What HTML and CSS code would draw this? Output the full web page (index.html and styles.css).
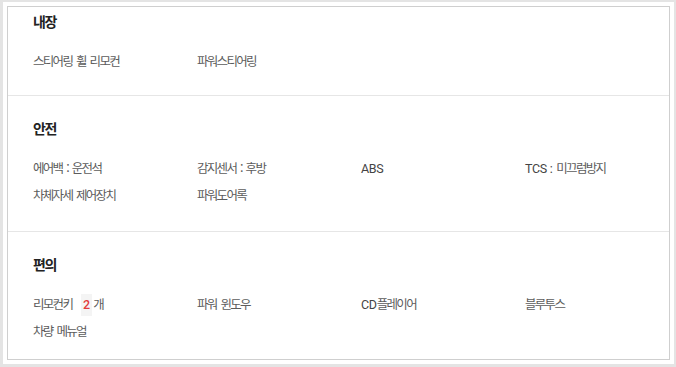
FILE: index.html
```html
<!DOCTYPE html>
<html lang="ko">
<head>
    <meta charset="UTF-8">
    <meta name="viewport" content="width=device-width, initial-scale=1.0">
    <title>차량 옵션</title>
    <link rel="stylesheet" href="styles.css">
</head>
<body>
    <div class="frame">
        <div class="options">
            <div class="group first">
                <h3>내장</h3>
                <ul>
                    <li>스티어링 휠 리모컨</li>
                    <li>파워스티어링</li>
                </ul>
            </div>

            <div class="group">
                <h3>안전</h3>
                <ul>
                    <li>에어백 : 운전석</li>
                    <li>감지센서 : 후방</li>
                    <li><span class="en">ABS</span></li>
                    <li><span class="en">TCS :</span> 미끄럼방지</li>
                    <li>차체자세 제어장치</li>
                    <li>파워도어록</li>
                </ul>
            </div>

            <div class="group last">
                <h3>편의</h3>
                <ul>
                    <li>리모컨키 <span class="count">2</span>개</li>
                    <li>파워 윈도우</li>
                    <li><span class="en">CD</span>플레이어</li>
                    <li>블루투스</li>
                    <li>차량 메뉴얼</li>
                </ul>
            </div>
        </div>
    </div>
</body>
</html>
```

FILE: styles.css
```css
body {
    margin: 0;
    background-color: #e4e4e4;
    font-family: "Noto Sans CJK KR", "Noto Sans", sans-serif;
}

.frame {
    margin: 2px 2px 3px 3px;
    height: 362px;
    box-sizing: border-box;
    padding: 4px;
    background-color: #ffffff;
}

.options {
    height: 100%;
    box-sizing: border-box;
    border: 1px solid #cfcfcf;
    overflow: hidden;
}

.group {
    padding: 22px 0 23px 25px;
    border-bottom: 1px solid #e6e6e6;
}

.group.first {
    padding-top: 4px;
    padding-bottom: 21px;
}

.group.last {
    padding-bottom: 13px;
    border-bottom: none;
}

h3 {
    margin: 0 0 16px;
    font-size: 14px;
    line-height: 20px;
    font-weight: bold;
    letter-spacing: -1.5px;
    color: #222;
}

ul {
    list-style: none;
    margin: 0;
    padding: 0;
    display: grid;
    grid-template-columns: repeat(4, 164px);
    grid-auto-rows: 27px;
}

li {
    font-size: 12.5px;
    line-height: 27px;
    letter-spacing: -1.7px;
    word-spacing: 2px;
    color: #5c5c5c;
}

.en {
    font-family: Roboto, "Noto Sans", sans-serif;
    letter-spacing: -0.3px;
    word-spacing: 0;
    color: #444;
}

.count {
    display: inline-block;
    margin: 0 1px 0 5px;
    padding: 0 2px;
    line-height: 22px;
    background-color: #f4f4f4;
    font-family: Roboto, sans-serif;
    font-weight: 500;
    letter-spacing: 0;
    color: #e33c3c;
}
```
